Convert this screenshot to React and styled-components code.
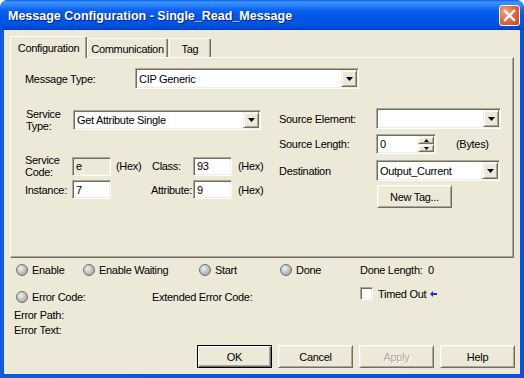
import React from 'react';
import styled, { createGlobalStyle } from 'styled-components';

const FACE = '#ECE9D8';
const SHADOW = '#ACA899';
const DARK = '#716F64';
const LIGHT = '#F1EFE2';

const GlobalStyle = createGlobalStyle`
  html, body {
    margin: 0;
    padding: 0;
    background: #ffffff;
  }

  body {
    font-family: "Liberation Sans", Arial, sans-serif;
    font-size: 11px;
    letter-spacing: -0.3px;
    color: #000000;
  }
`;

const DownArrow = ({ w = 7, h = 4 }) => (
  <svg width={w} height={h} viewBox={`0 0 ${w} ${h}`}>
    <path d={`M0 0H${w}L${w / 2} ${h}Z`} fill="#000" />
  </svg>
);

const UpArrow = ({ w = 5, h = 3 }) => (
  <svg width={w} height={h} viewBox={`0 0 ${w} ${h}`}>
    <path d={`M0 ${h}H${w}L${w / 2} 0Z`} fill="#000" />
  </svg>
);

const Combo = ({ w, h = 21, value }) => (
  <Field $w={w} $h={h}>
    <FieldText>{value}</FieldText>
    <DropButton>
      <DownArrow />
    </DropButton>
  </Field>
);

const Edit = ({ w, h = 19, value, disabled }) => (
  <Field $w={w} $h={h} $disabled={disabled}>
    <FieldText>{value}</FieldText>
  </Field>
);

const Indicator = ({ w, children }) => (
  <LedItem $w={w}>
    <Led />
    <span>{children}</span>
  </LedItem>
);

const App = () => {
  return (
    <React.Fragment>
      <GlobalStyle />
      <Window>
        <TitleBar>
          <Title>Message Configuration - Single_Read_Message</Title>
          <CloseButton>
            <svg width="21" height="21" viewBox="0 0 21 21">
              <path d="M6 6L15 15M15 6L6 15" stroke="#fff" strokeWidth="2.4" strokeLinecap="square" />
            </svg>
          </CloseButton>
        </TitleBar>

        <Body>
          <TabStrip>
            <Tab $w={77} $active>Configuration</Tab>
            <Tab $w={81}>Communication</Tab>
            <Tab $w={42} $ml={1}>Tag</Tab>
          </TabStrip>

          <Panel>
            <Row $h={21}>
              <Label $w={110}>Message Type:</Label>
              <Combo w={224} value="CIP Generic" />
            </Row>

            <Columns>
              <LeftCol>
                <Row $h={20}>
                  <Label $w={47} $pl={1}>{'Service\nType:'}</Label>
                  <Combo w={188} h={20} value="Get Attribute Single" />
                </Row>

                <CodeGrid $mt={24}>
                  <Label>{'Service\nCode:'}</Label>
                  <Edit w={39} value="e" disabled />
                  <Hex $pl={5}>(Hex)</Hex>
                  <Label>Class:</Label>
                  <Edit w={39} value="93" />
                  <Hex $pl={6}>(Hex)</Hex>
                </CodeGrid>

                <CodeGrid $mt={7}>
                  <Label>Instance:</Label>
                  <Edit w={39} value="7" />
                  <span />
                  <Label $ml={-1}>Attribute:</Label>
                  <Edit w={39} value="9" />
                  <Hex $pl={6}>(Hex)</Hex>
                </CodeGrid>
              </LeftCol>

              <RightCol>
                <Row $h={21}>
                  <Label $w={97}>Source Element:</Label>
                  <Combo w={125} value="" />
                </Row>

                <Row $h={20} $mt={5}>
                  <Label $w={97}>Source Length:</Label>
                  <Field $w={60} $h={20}>
                    <FieldText>0</FieldText>
                    <SpinButtons>
                      <SpinButton>
                        <UpArrow />
                      </SpinButton>
                      <SpinButton>
                        <DownArrow w={5} h={3} />
                      </SpinButton>
                    </SpinButtons>
                  </Field>
                  <Hex $pl={20}>(Bytes)</Hex>
                </Row>

                <Row $h={21} $mt={6}>
                  <Label $w={97}>Destination</Label>
                  <Combo w={124} value="Output_Current" />
                </Row>

                <Row $h={23} $mt={4}>
                  <Label $w={98} />
                  <Button>New Tag...</Button>
                </Row>
              </RightCol>
            </Columns>
          </Panel>

          <Status>
            <Row $h={14} $mt={5}>
              <Indicator w={67}>Enable</Indicator>
              <Indicator w={116}>Enable Waiting</Indicator>
              <Indicator w={81}>Start</Indicator>
              <Indicator w={80}>Done</Indicator>
              <span>Done Length:&nbsp; 0</span>
            </Row>

            <Row $h={14} $mt={13}>
              <Indicator w={136}>Error Code:</Indicator>
              <Label $w={208}>Extended Error Code:</Label>
              <TimedOut>
                <CheckBox />
                <span>Timed Out</span>
                <svg width="7" height="6" viewBox="0 0 7 6">
                  <path d="M0 3L3 0V2H7V4H3V6Z" fill="#1A36D8" />
                </svg>
              </TimedOut>
            </Row>

            <ErrorLine $mt={5}>Error Path:</ErrorLine>
            <ErrorLine $mt={3}>Error Text:</ErrorLine>
          </Status>

          <ButtonRow>
            <Button $primary>OK</Button>
            <Button>Cancel</Button>
            <Button $disabled>Apply</Button>
            <Button>Help</Button>
          </ButtonRow>
        </Body>
      </Window>
    </React.Fragment>
  );
};

export default App;

const Window = styled.div`
  width: 524px;
  height: 378px;
  display: flex;
  flex-direction: column;
  background: linear-gradient(90deg, #0A3FD0 0, #1C6CF2 1px, #0A58E8 2px, #0752E0 100%);
  border-radius: 8px 8px 0 0;
  overflow: hidden;
`;

const TitleBar = styled.div`
  flex: none;
  height: 30px;
  box-sizing: border-box;
  display: flex;
  align-items: center;
  justify-content: space-between;
  padding: 0 4px 0 8px;
  background: linear-gradient(
    180deg,
    #0A5DE8 0,
    #3D95FF 2px,
    #2E86FB 5px,
    #0E62F0 10px,
    #0057E6 16px,
    #0054E2 24px,
    #0048D6 28px,
    #003CC6 30px
  );
`;

const Title = styled.span`
  font-family: "Liberation Sans", Arial, sans-serif;
  font-weight: bold;
  font-size: 12.5px;
  letter-spacing: 0;
  color: #ffffff;
  text-shadow: 1px 1px 0 #0A1E8C;
  padding-top: 2px;
`;

const CloseButton = styled.div`
  width: 21px;
  height: 21px;
  box-sizing: border-box;
  border: 1px solid #ffffff;
  border-radius: 3px;
  background: radial-gradient(circle at 30% 30%, #F0A488 0, #E26A44 45%, #C9451E 100%);
  display: flex;
  align-items: center;
  justify-content: center;
  margin-top: 1px;

  svg {
    margin: -1px;
  }
`;

const Body = styled.div`
  flex: 1;
  margin: 0 4px 4px;
  background: ${FACE};
  padding: 6px 6px 0;
  display: flex;
  flex-direction: column;
`;

const TabStrip = styled.div`
  display: flex;
  align-items: flex-end;
  height: 22px;
  margin-bottom: -1px;
  position: relative;
  z-index: 1;
`;

const Tab = styled.div`
  box-sizing: border-box;
  width: ${({ $w }) => $w}px;
  height: ${({ $active }) => ($active ? 22 : 19)}px;
  margin-bottom: ${({ $active }) => ($active ? 0 : 1)}px;
  margin-left: ${({ $ml }) => $ml || 0}px;
  background: ${FACE};
  border-top: 1px solid #ffffff;
  border-left: 1px solid #ffffff;
  border-right: 1px solid ${DARK};
  box-shadow: inset -1px 0 0 ${SHADOW};
  border-radius: 2px 2px 0 0;
  display: flex;
  align-items: center;
  justify-content: center;
  padding-top: ${({ $active }) => ($active ? 0 : 2)}px;
`;

const Panel = styled.div`
  box-sizing: border-box;
  height: 201px;
  border-top: 1px solid #ffffff;
  border-left: 1px solid #ffffff;
  border-right: 1px solid ${DARK};
  border-bottom: 1px solid ${DARK};
  box-shadow: inset -1px -1px 0 ${SHADOW};
  padding: 10px 0 0 14px;
  display: flex;
  flex-direction: column;
`;

const Row = styled.div`
  display: flex;
  align-items: center;
  height: ${({ $h }) => $h}px;
  margin-top: ${({ $mt }) => $mt || 0}px;
`;

const Label = styled.span`
  flex: none;
  width: ${({ $w }) => ($w ? `${$w}px` : 'auto')};
  padding-left: ${({ $pl }) => $pl || 0}px;
  margin-left: ${({ $ml }) => $ml || 0}px;
  white-space: pre-line;
  line-height: 12px;
`;

const Hex = styled.span`
  flex: none;
  padding-left: ${({ $pl }) => $pl || 0}px;
`;

const Columns = styled.div`
  display: flex;
  margin-top: 19px;
`;

const LeftCol = styled.div`
  width: 254px;
  padding-top: 2px;
  display: flex;
  flex-direction: column;
`;

const RightCol = styled.div`
  display: flex;
  flex-direction: column;
`;

const CodeGrid = styled.div`
  display: grid;
  grid-template-columns: 47px 39px 41px 41px 39px auto;
  align-items: center;
  height: 19px;
  margin-top: ${({ $mt }) => $mt || 0}px;
`;

const Field = styled.div`
  box-sizing: border-box;
  flex: none;
  width: ${({ $w }) => $w}px;
  height: ${({ $h }) => $h}px;
  background: ${({ $disabled }) => ($disabled ? FACE : '#ffffff')};
  border: 1px solid;
  border-color: ${SHADOW} #ffffff #ffffff ${SHADOW};
  box-shadow: inset 1px 1px 0 ${DARK}, inset -1px -1px 0 ${LIGHT};
  display: flex;
  align-items: stretch;
  padding: 1px;
`;

const FieldText = styled.span`
  flex: 1;
  display: flex;
  align-items: center;
  padding-left: 2px;
  white-space: nowrap;
  overflow: hidden;
`;

const raised = `
  background: ${FACE};
  border: 1px solid;
  border-color: ${LIGHT} ${DARK} ${DARK} ${LIGHT};
  box-shadow: inset 1px 1px 0 #ffffff, inset -1px -1px 0 ${SHADOW};
`;

const DropButton = styled.div`
  box-sizing: border-box;
  width: 16px;
  flex: none;
  ${raised}
  display: flex;
  align-items: center;
  justify-content: center;
`;

const SpinButtons = styled.div`
  width: 16px;
  flex: none;
  display: flex;
  flex-direction: column;
`;

const SpinButton = styled.div`
  box-sizing: border-box;
  flex: 1;
  ${raised}
  display: flex;
  align-items: center;
  justify-content: center;
`;

const Button = styled.div`
  box-sizing: border-box;
  flex: none;
  width: 75px;
  height: 23px;
  display: flex;
  align-items: center;
  justify-content: center;
  background: ${FACE};
  border: 1px solid;
  border-color: ${({ $primary }) => ($primary ? '#000000' : `#ffffff ${DARK} ${DARK} #ffffff`)};
  box-shadow: ${({ $primary }) =>
    $primary
      ? `inset 1px 1px 0 #ffffff, inset -1px -1px 0 ${DARK}, inset -2px -2px 0 ${SHADOW}`
      : `inset 1px 1px 0 ${LIGHT}, inset -1px -1px 0 ${SHADOW}`};
  color: ${({ $disabled }) => ($disabled ? SHADOW : '#000000')};
  text-shadow: ${({ $disabled }) => ($disabled ? '1px 1px 0 #ffffff' : 'none')};
`;

const Status = styled.div`
  display: flex;
  flex-direction: column;
  padding-left: 6px;
`;

const LedItem = styled.div`
  flex: none;
  width: ${({ $w }) => $w}px;
  display: flex;
  align-items: center;
  gap: 4px;
`;

const Led = styled.span`
  box-sizing: border-box;
  width: 12px;
  height: 12px;
  border-radius: 50%;
  border: 1px solid #6E6E6E;
  background: radial-gradient(circle at 38% 35%, #F2F2F2 0, #C4C4C4 45%, #969696 100%);
`;

const TimedOut = styled.div`
  display: flex;
  align-items: center;
  gap: 5px;
  align-self: flex-start;
  margin-top: -3px;

  svg {
    margin-left: -1px;
  }
`;

const CheckBox = styled.span`
  box-sizing: border-box;
  width: 13px;
  height: 13px;
  background: #ffffff;
  border: 1px solid;
  border-color: ${SHADOW} #ffffff #ffffff ${SHADOW};
  box-shadow: inset 1px 1px 0 ${DARK}, inset -1px -1px 0 ${LIGHT};
`;

const ErrorLine = styled.div`
  height: 12px;
  line-height: 12px;
  margin-top: ${({ $mt }) => $mt || 0}px;
  margin-left: -2px;
`;

const ButtonRow = styled.div`
  display: flex;
  justify-content: flex-end;
  gap: 6px;
  margin-top: 9px;
  margin-right: -1px;
`;
